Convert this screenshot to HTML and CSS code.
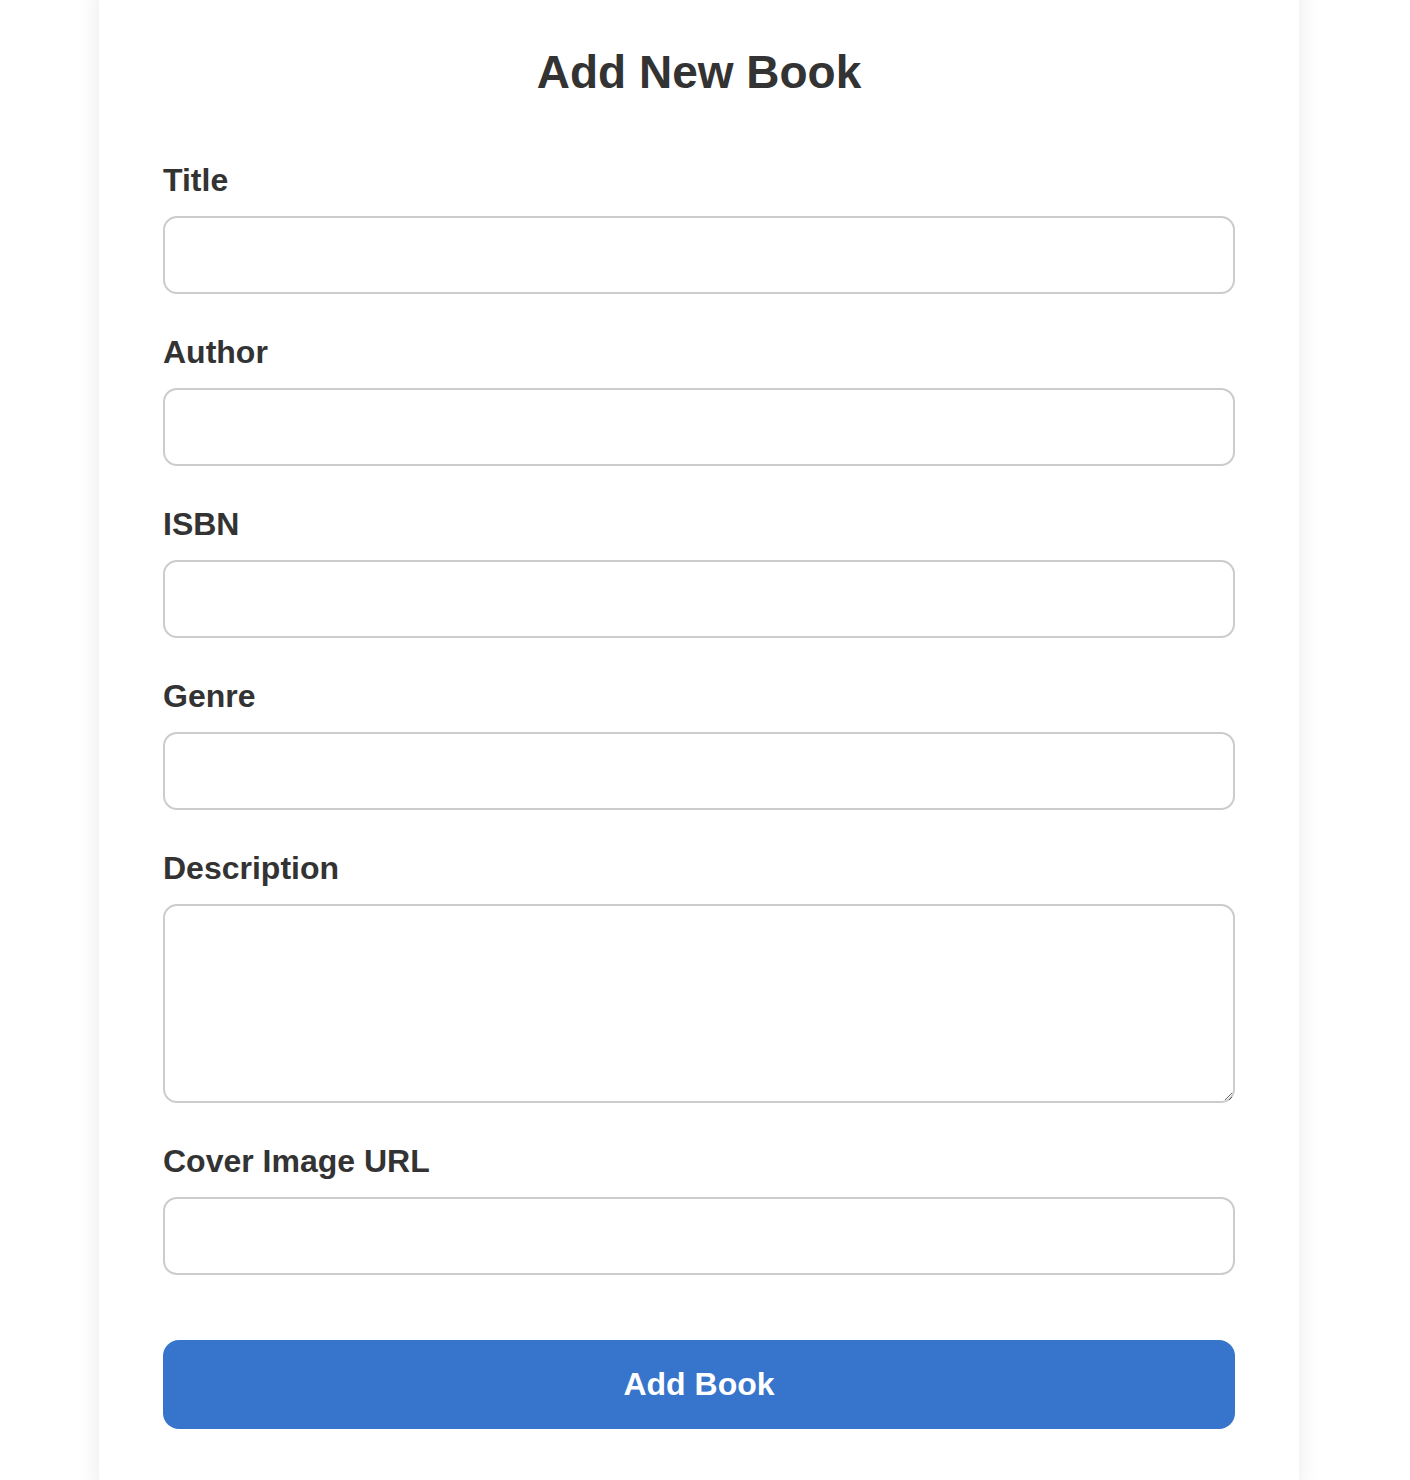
FILE: index.html
```html
<!DOCTYPE html>
<html lang="en">
<head>
<meta charset="utf-8">
<title>Add New Book</title>
<link rel="stylesheet" href="styles.css">
</head>
<body>
<div class="card">
  <h2 class="heading">Add New Book</h2>
  <form class="form">
    <div class="group">
      <label class="label" for="title">Title</label>
      <input class="field" id="title" type="text">
    </div>
    <div class="group">
      <label class="label" for="author">Author</label>
      <input class="field" id="author" type="text">
    </div>
    <div class="group">
      <label class="label" for="isbn">ISBN</label>
      <input class="field" id="isbn" type="text">
    </div>
    <div class="group">
      <label class="label" for="genre">Genre</label>
      <input class="field" id="genre" type="text">
    </div>
    <div class="group">
      <label class="label" for="desc">Description</label>
      <textarea class="field area" id="desc"></textarea>
    </div>
    <div class="group">
      <label class="label" for="cover">Cover Image URL</label>
      <input class="field" id="cover" type="text">
    </div>
    <button class="submit" type="button">Add Book</button>
  </form>
</div>
</body>
</html>
```

FILE: styles.css
```css
* { box-sizing: border-box; }

html, body {
  margin: 0;
  background: #ffffff;
}

body {
  padding-right: 12px;
  font-family: "Liberation Sans", Arial, sans-serif;
  color: #333333;
  overflow: hidden;
}

.card {
  width: 1200px;
  margin: -20px auto 0;
  padding: 64px 64px 64px;
  background: #ffffff;
  border-radius: 16px;
  box-shadow: 0 0 24px rgba(0, 0, 0, 0.09);
}

.heading {
  margin: 0 0 60px;
  font-size: 46px;
  line-height: 56px;
  font-weight: 700;
  text-align: center;
  color: #333333;
}

.form {
  display: flex;
  flex-direction: column;
}

.group {
  display: flex;
  flex-direction: column;
  margin-bottom: 38px;
}

.label {
  display: block;
  font-size: 32px;
  line-height: 40px;
  font-weight: 700;
  color: #333333;
  margin-bottom: 16px;
}

.field {
  display: block;
  width: 100%;
  height: 78px;
  margin: 0;
  padding: 16px 20px;
  border: 2px solid #cccccc;
  border-radius: 14px;
  background: #ffffff;
  font-family: "Liberation Sans", Arial, sans-serif;
  font-size: 32px;
  color: #333333;
  outline: none;
}

.area {
  height: 199px;
  resize: vertical;
}

.submit {
  display: block;
  width: 100%;
  height: 89px;
  margin-top: 27px;
  border: none;
  border-radius: 16px;
  background: #3774cb;
  color: #ffffff;
  font-family: "Liberation Sans", Arial, sans-serif;
  font-size: 32px;
  font-weight: 700;
  cursor: pointer;
}
```
